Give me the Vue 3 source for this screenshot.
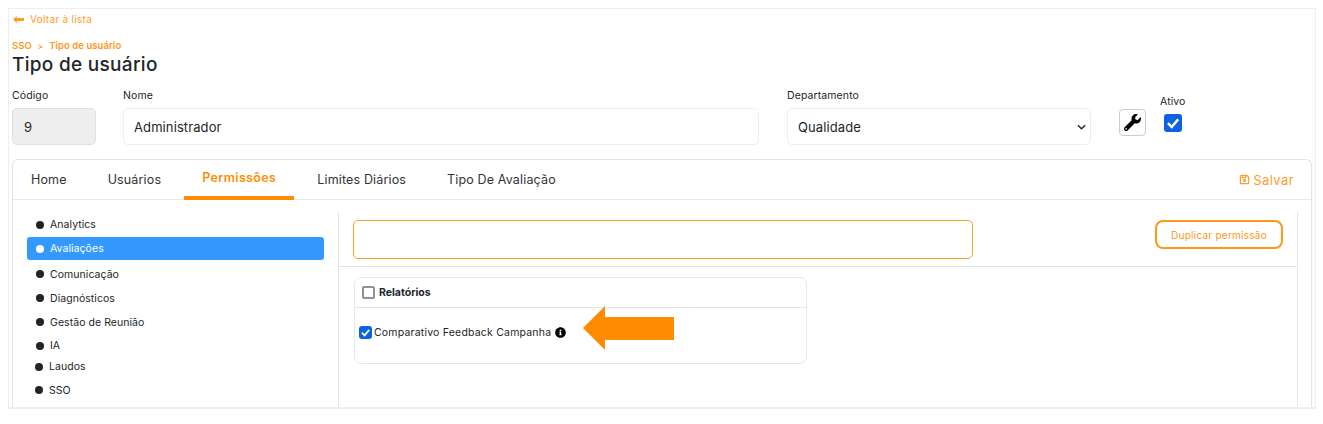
<script setup>
const tabs = ['Home', 'Usuários', 'Permissões', 'Limites Diários', 'Tipo De Avaliação']
const menu = [
  { label: 'Analytics', cls: 'h-a up' },
  { label: 'Avaliações', cls: 'h-b active' },
  { label: 'Comunicação', cls: 'h-c' },
  { label: 'Diagnósticos', cls: 'h-a' },
  { label: 'Gestão de Reunião', cls: 'h-a' },
  { label: 'IA', cls: 'h-b' },
  { label: 'Laudos', cls: 'h-d shift' },
  { label: 'SSO', cls: 'h-a shift' }
]
</script>

<template>
  <div class="frame">
    <a class="back">
      <svg class="back-icon" viewBox="0 0 11 7"><path d="M0 3.500 3.800 0v2H11v3H3.800v2z" /></svg>
      Voltar à lista
    </a>
    <div class="crumbs"><span>SSO</span><span class="sep">&gt;</span><span>Tipo de usuário</span></div>
    <h1>Tipo de usuário</h1>

    <div class="fields">
      <label class="field f-code"><span class="lab">Código</span><div class="input disabled">9</div></label>
      <label class="field f-name"><span class="lab">Nome</span><div class="input">Administrador</div></label>
      <label class="field f-dept">
        <span class="lab">Departamento</span>
        <div class="input select">
          Qualidade
          <svg class="chev" viewBox="0 0 10 6"><path d="M1 1l4 4 4-4" /></svg>
        </div>
      </label>
      <button class="wrench">
        <svg viewBox="0 0 512 512"><path d="M507.700 109.100c-2.200-9-13.500-12.100-20.100-5.500l-74.400 74.400-67.900-11.300-11.300-67.900 74.400-74.400c6.600-6.600 3.400-17.900-5.700-20.200-47.400-11.700-99.600.9-136.600 37.900-39.600 39.600-50.600 97.100-34.100 147.200L18.700 402.800c-25 25-25 65.500 0 90.500 25 25 65.500 25 90.500 0l213.200-213.200c50.100 16.700 107.500 5.700 147.400-34.200 37.100-37.100 49.700-89.300 37.900-136.800zM64 472c-13.200 0-24-10.800-24-24 0-13.300 10.700-24 24-24s24 10.700 24 24c0 13.200-10.700 24-24 24z" /></svg>
      </button>
      <div class="active-box">
        <span class="lab">Ativo</span>
        <span class="check big">
          <svg viewBox="0 0 16 16"><path d="M3.500 8.200 6.800 11.500 12.600 4.800" /></svg>
        </span>
      </div>
    </div>

    <section class="card">
      <header class="tabs">
        <a v-for="t in tabs" :key="t" class="tab" :class="{ on: t === 'Permissões' }">{{ t }}</a>
        <a class="save">
          <svg viewBox="0 0 12 12"><path d="M2.500 1.500h6l2 2v6a1 1 0 0 1-1 1h-7a1 1 0 0 1-1-1v-7a1 1 0 0 1 1-1z" /><path d="M3.800 1.500v2.400h3.400V1.500" /><circle cx="6" cy="7.200" r="1.100" /></svg>
          Salvar
        </a>
      </header>

      <div class="body">
        <nav class="side">
          <div v-for="m in menu" :key="m.label" class="item" :class="m.cls">
            <i class="dot"></i>{{ m.label }}
          </div>
        </nav>

        <div class="main">
          <div class="toolbar">
            <div class="search"></div>
            <button class="dup">Duplicar permissão</button>
          </div>
          <div class="perm">
            <div class="perm-head"><span class="check empty"></span>Relatórios</div>
            <div class="perm-row">
              <span class="check small">
                <svg viewBox="0 0 16 16"><path d="M3.500 8.200 6.800 11.500 12.600 4.800" /></svg>
              </span>
              Comparativo Feedback Campanha
              <svg class="info" viewBox="0 0 512 512"><path d="M256 8C119 8 8 119 8 256s111 248 248 248 248-111 248-248S393 8 256 8zm0 110a42 42 0 1 1 0 84 42 42 0 0 1 0-84zm56 254c0 6.600-5.400 12-12 12h-88c-6.600 0-12-5.400-12-12v-24c0-6.600 5.400-12 12-12h12v-64h-12c-6.600 0-12-5.400-12-12v-24c0-6.600 5.400-12 12-12h64c6.600 0 12 5.400 12 12v100h12c6.600 0 12 5.400 12 12z" /></svg>
            </div>
            <svg class="arrow" viewBox="0 0 91 44"><path d="M0 22 22 0v11h69v23H22v10z" /></svg>
          </div>
        </div>
      </div>
    </section>
  </div>
</template>

<style>
html, body { margin: 0; background: #fff; }
</style>

<style scoped>
.frame {
  position: relative;
  box-sizing: border-box;
  width: 1308px;
  height: 401px;
  margin: 8px 0 0 8px;
  padding: 4px 3px 0 3px;
  border: 1px solid #eeeeee;
  border-bottom-width: 2px;
  overflow: hidden;
  font-family: Inter, "Open Sans", sans-serif;
  color: #212529;
}
.back {
  display: flex;
  align-items: center;
  height: 12px;
  font-size: 10px;
  letter-spacing: .3px;
  color: #ff8c00;
  opacity: .85;
  padding-left: 1px;
}
.back-icon { width: 11px; height: 7px; margin-right: 6px; fill: #ff8c00; }
.crumbs {
  display: flex;
  gap: 6px;
  margin-top: 13px;
  height: 15px;
  align-items: center;
  font-size: 9.500px;
  font-weight: 600;
  letter-spacing: .05px;
  color: #ff8c00;
  opacity: .9;
}
.sep { font-size: 8px; }
h1 {
  margin: 0;
  font-size: 19px;
  line-height: 24px;
  font-weight: 500;
  color: #212529;
  letter-spacing: .3px;
}
.fields { display: flex; margin-top: 12px; height: 70px; }
.field { display: flex; flex-direction: column; }
.lab { font-size: 10.500px; line-height: 14px; color: #212529; letter-spacing: .1px; }
.input {
  box-sizing: border-box;
  height: 37px;
  margin-top: 5px;
  display: flex;
  align-items: center;
  padding-left: 10px;
  font-size: 13px;
  letter-spacing: .1px;
  color: #212529;
  border: 1px solid #eeeeee;
  border-radius: 5px;
  background: #fff;
}
.disabled { background: #eeeeee; border-color: #e0e0e0; padding-left: 11px; }
.f-code { width: 84px; }
.f-name { width: 636px; margin-left: 27px; }
.f-dept { width: 304px; margin-left: 28px; }
.select { justify-content: space-between; }
.chev { width: 9px; height: 6px; margin-right: 4px; fill: none; stroke: #212529; stroke-width: 1.600; }
.wrench {
  box-sizing: border-box;
  width: 27px;
  height: 27px;
  margin: 20px 0 0 28px;
  padding: 0;
  display: flex;
  align-items: center;
  justify-content: center;
  background: #fff;
  border: 1px solid #cccccc;
  border-radius: 4px;
}
.wrench svg { width: 17px; height: 17px; fill: #000; }
.active-box { margin: 6px 0 0 14px; display: flex; flex-direction: column; }
.check {
  box-sizing: border-box;
  display: flex;
  align-items: center;
  justify-content: center;
  background: #0d62e0;
  border-radius: 3px;
  flex: none;
}
.check svg { width: 100%; height: 100%; fill: none; stroke: #fff; stroke-width: 2.200; }
.big { width: 18px; height: 18px; margin: 5px 0 0 4px; }
.small { width: 13px; height: 13px; margin-right: 2px; }
.empty { width: 13px; height: 13px; background: #fff; border: 2px solid #8f8f9d; margin-right: 4px; border-radius: 2px; }

.card {
  box-sizing: border-box;
  border: 1px solid #e4e4e4;
  border-bottom: 0;
  border-radius: 6px 6px 0 0;
}
.tabs {
  display: flex;
  align-items: stretch;
  height: 39px;
  border-bottom: 1px solid #e8e8e8;
}
.tab {
  box-sizing: border-box;
  display: flex;
  align-items: center;
  justify-content: center;
  height: 40px;
  padding: 2px 18px 0;
  margin-right: 5px;
  font-size: 12.500px;
  letter-spacing: .15px;
  color: #333;
  border-bottom: 4px solid transparent;
  white-space: nowrap;
}
.tab.on { color: #ff8c00; font-weight: 600; border-bottom-color: #ff8c00; padding: 0 18px 2px; letter-spacing: .35px; }
.save {
  margin-left: auto;
  margin-right: 17px;
  display: flex;
  align-items: center;
  gap: 3px;
  font-size: 13px;
  letter-spacing: .4px;
  color: #ff8c00;
  opacity: .85;
}
.save svg { width: 11px; height: 11px; fill: none; stroke: #ff8c00; stroke-width: 1.300; }

.body { display: flex; height: 220px; margin-top: 1px; }
.side { width: 325px; box-sizing: border-box; padding: 12px 0 0 14px; flex: none; }
.item {
  box-sizing: border-box;
  display: flex;
  align-items: center;
  width: 297px;
  height: 24px;
  padding-left: 9px;
  font-size: 10.500px;
  letter-spacing: .05px;
  color: #212529;
  border-radius: 3px;
}
.dot { width: 8px; height: 8px; border-radius: 50%; background: #212529; margin-right: 6px; flex: none; }
.up { padding-bottom: 1px; }
.h-b { height: 23px; }
.h-c { height: 26px; padding-top: 2px; }
.h-d { height: 21px; padding-bottom: 2px; }
.shift { padding-left: 8px; }
.active { background: #3399ff; color: #fff; }
.active .dot { background: #fff; }

.main {
  box-sizing: border-box;
  width: 960px;
  margin-top: 11px;
  border-left: 1px solid #e4e4e4;
  border-right: 1px solid #e4e4e4;
}
.toolbar {
  display: flex;
  justify-content: space-between;
  align-items: flex-start;
  height: 46px;
  padding: 8px 14px 0 14px;
  border-bottom: 1px solid #e4e4e4;
}
.search {
  box-sizing: border-box;
  width: 620px;
  height: 39px;
  border: 1px solid #ff9f26;
  border-radius: 5px;
}
.dup {
  box-sizing: border-box;
  width: 128px;
  height: 29px;
  padding: 0;
  background: #fff;
  border: 2px solid #ff8c00;
  border-radius: 8px;
  font: 10px Inter, sans-serif;
  letter-spacing: .25px;
  color: #ff8c00;
  opacity: .9;
}
.perm {
  position: relative;
  box-sizing: border-box;
  width: 453px;
  height: 87px;
  margin: 10px 0 0 15px;
  border: 1px solid #e8e8e8;
  border-radius: 7px;
}
.perm-head {
  display: flex;
  align-items: center;
  height: 29px;
  padding-left: 7px;
  border-bottom: 1px solid #e4e4e4;
  font-size: 10.500px;
  font-weight: 700;
  color: #212529;
}
.perm-row {
  display: flex;
  align-items: center;
  height: 48px;
  padding-left: 4px;
  font-size: 10.500px;
  letter-spacing: .2px;
  color: #212529;
}
.info { width: 11px; height: 11px; margin-left: 4px; fill: #000; }
.arrow {
  position: absolute;
  left: 228px;
  top: 28px;
  width: 91px;
  height: 44px;
  fill: #ff8c00;
}
</style>
